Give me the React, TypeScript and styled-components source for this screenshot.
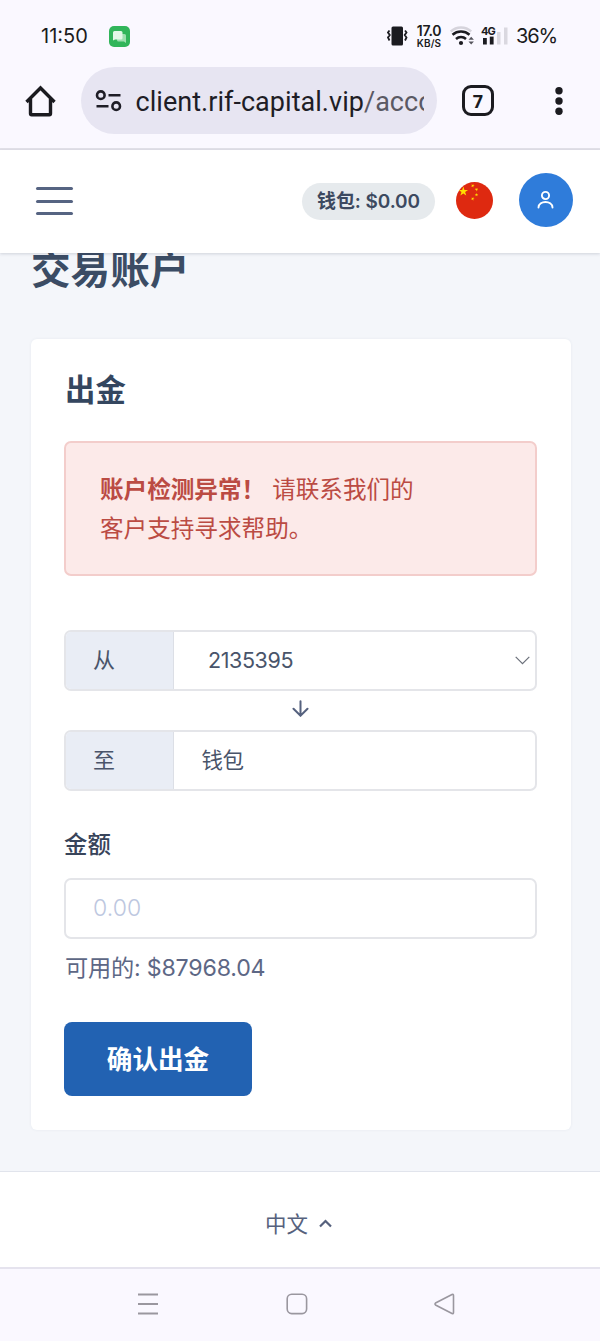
import React from "react";
import styled, { createGlobalStyle } from "styled-components";

const Global = createGlobalStyle`
  * { box-sizing: border-box; }
  body { margin: 0; background: #faf8ff; }
  button, input { font: inherit; }
  svg { display: block; flex: none; }
`;

const cjk = `"Noto Sans CJK SC", sans-serif`;

const Screen = styled.div`
  width: 600px;
  height: 1341px;
  display: flex;
  flex-direction: column;
  overflow: hidden;
  background: #faf8ff;
  font-family: Inter, ${cjk};
  color: #3f4b63;
  white-space: nowrap;
`;

const StatusBar = styled.div`
  height: 67px;
  padding: 5px 44px 0 41px;
  display: flex;
  align-items: center;
  color: #1b1b20;
`;

const Clock = styled.span`
  width: 68px;
  font: 400 20px/24px Inter, sans-serif;
  letter-spacing: 0;
`;

const StatusIcons = styled.div`
  margin-left: auto;
  display: flex;
  align-items: center;
`;

const NetSpeed = styled.div`
  width: 26px;
  margin: 0 8px 0 8px;
  text-align: center;
`;

const Rate = styled.div`
  font: 600 14px/14px Inter, sans-serif;
  letter-spacing: -0.3px;
`;

const RateUnit = styled.div`
  font: 600 10px/10px Inter, sans-serif;
  letter-spacing: 0.1px;
`;

const Battery = styled.span`
  width: 40px;
  margin-left: 8px;
  font: 400 20px/24px Inter, sans-serif;
  letter-spacing: -1.1px;
`;

const BrowserBar = styled.div`
  height: 83px;
  border-bottom: 2px solid #e2e1e9;
  padding: 0 32px 0 25px;
  display: flex;
  align-items: flex-start;
`;

const BarIcon = styled.div<{ $w: number; $indent?: number }>`
  width: ${(p) => p.$w}px;
  height: 67px;
  padding-left: ${(p) => p.$indent ?? 0}px;
  display: flex;
  align-items: center;
`;

const UrlPill = styled.div`
  width: 356px;
  height: 67px;
  border-radius: 34px;
  background: #e7e5f2;
  padding: 0 13px 0 14px;
  display: flex;
  align-items: center;
`;

const Url = styled.div`
  margin-left: 13.5px;
  width: 289px;
  overflow: hidden;
  font: 400 27px/40px Roboto, sans-serif;
  letter-spacing: 0.04px;
  color: #1e1d26;
  padding-top: 3px;
  span { color: #5a5964; }
`;

const TabCount = styled.div`
  width: 32px;
  height: 31px;
  border: 3px solid #1b1b20;
  border-radius: 9px;
  display: flex;
  align-items: center;
  justify-content: center;
  font: 700 18px/20px "Noto Sans", sans-serif;
  color: #1b1b20;
`;

const SiteHeader = styled.header`
  position: relative;
  z-index: 1;
  height: 103px;
  flex: none;
  background: #fff;
  box-shadow: 0 1px 3px rgba(40, 50, 80, 0.18);
  padding: 0 27px 4px 36px;
  display: flex;
  align-items: center;
`;

const Burger = styled.div`
  width: 37px;
  height: 28px;
  margin-top: 3px;
  display: flex;
  flex-direction: column;
  justify-content: space-between;
  i { height: 3px; border-radius: 2px; background: #566482; }
`;

const WalletBadge = styled.div`
  width: 133px;
  height: 37px;
  margin: 4px 21px 0 auto;
  border-radius: 19px;
  background: #e6eaed;
  color: #3c4960;
  display: flex;
  align-items: center;
  justify-content: center;
  font: 600 19px/28px Inter, ${cjk};
  letter-spacing: -0.1px;
`;

const FlagSlot = styled.div`
  margin-top: 2px;
`;

const Avatar = styled.div`
  width: 54px;
  height: 54px;
  margin-left: 26px;
  border-radius: 50%;
  background: #2f7cda;
  display: flex;
  align-items: center;
  justify-content: center;
`;

const Content = styled.main`
  height: 918px;
  flex: none;
  overflow: hidden;
  background: #f4f6fa;
  padding: 0 29px 0 31px;
`;

const PageTitle = styled.h1`
  margin: -7px 0 51px;
  height: 42px;
  font: 700 39.6px/42px ${cjk};
  color: #3b4c64;
`;

const Card = styled.section`
  height: 791px;
  border-radius: 6px;
  background: #fff;
  box-shadow: 0 0 3px rgba(40, 70, 100, 0.07);
  padding: 27px 34px 0 33px;
`;

const CardTitle = styled.h2`
  margin: 0 0 31px 1px;
  font: 700 30.4px/44px ${cjk};
  color: #34465f;
`;

const Alert = styled.div`
  height: 135px;
  border: 2px solid #f3cdcb;
  border-radius: 7px;
  background: #fceae9;
  padding: 26px 34px 0;
  color: #bb4b43;
  font: 400 23.6px/39px ${cjk};
  strong { font-weight: 700; }
  span { margin-left: 7px; }
`;

const Field = styled.div<{ $top?: number }>`
  height: 61px;
  margin-top: ${(p) => p.$top ?? 0}px;
  border: 2px solid #e4e5e9;
  border-radius: 7px;
  overflow: hidden;
  display: flex;
  align-items: stretch;
`;

const FieldLabel = styled.label`
  width: 108px;
  border-right: 1px solid #dcdfe6;
  background: #e9edf5;
  padding: 0 0 2px 27px;
  font: 400 22px/52px ${cjk};
  color: #49546a;
`;

const FieldValue = styled.div<{ $indent: number }>`
  flex: 1;
  padding: 0 5px 1px ${(p) => p.$indent}px;
  display: flex;
  align-items: center;
  justify-content: space-between;
  font: 400 21.5px/30px Inter, ${cjk};
  letter-spacing: -0.4px;
  color: #49546a;
`;

const ArrowRow = styled.div`
  height: 39px;
  padding-bottom: 4px;
  display: flex;
  align-items: center;
  justify-content: center;
`;

const AmountLabel = styled.label`
  display: block;
  margin: 35px 0 18px;
  font: 500 23.4px/34px ${cjk};
  color: #38445a;
`;

const AmountInput = styled.input`
  width: 100%;
  height: 61px;
  display: block;
  border: 2px solid #e4e5e9;
  border-radius: 7px;
  background: #fff;
  padding: 0 27px 1px;
  font: 300 23px/30px Inter, sans-serif;
  letter-spacing: 0.1px;
  &::placeholder { color: #bdc7e0; opacity: 1; }
`;

const Available = styled.div`
  margin-top: 12px;
  padding-left: 1px;
  font: 400 23.2px/34px Inter, ${cjk};
  letter-spacing: -0.2px;
  color: #5d6785;
`;

const Submit = styled.button`
  width: 188px;
  height: 74px;
  margin-top: 37px;
  display: block;
  border: 0;
  border-radius: 8px;
  background: #2262b2;
  color: #fff;
  padding: 0 0 2px;
  font: 700 25.6px/40px ${cjk};
`;

const Footer = styled.footer`
  height: 96px;
  flex: none;
  border-top: 1px solid #e1e4ec;
  background: #fff;
  padding: 7px 3px 0 0;
  display: flex;
  align-items: center;
  justify-content: center;
  gap: 11px;
  font: 400 21.5px/30px ${cjk};
  color: #56617d;
`;

const NavBar = styled.nav`
  flex: 1;
  border-top: 2px solid #e5e3ee;
  display: flex;
  align-items: center;
  justify-content: space-between;
  padding: 0 145px 2px 137px;
`;

const ChatIcon = () => (
  <svg width="21" height="21" viewBox="0 0 21 21">
    <rect width="21" height="21" rx="5" fill="#31b55a" />
    <path d="M9 8h6.500a1.500 1.500 0 0 1 1.500 1.500V17l-2-1.500H9.500A1.500 1.500 0 0 1 8 14z" fill="#9ee0b0" />
    <path d="M5.500 5h6.500a1.500 1.500 0 0 1 1.500 1.500v5.500a1.500 1.500 0 0 1-1.500 1.500H6L4 14.500v-8A1.500 1.500 0 0 1 5.500 5z" fill="#e2f8e7" />
  </svg>
);

const VibrateIcon = () => (
  <svg width="21" height="20" viewBox="0 0 21 20">
    <rect x="4.500" y="0.500" width="11.500" height="19" rx="1.500" fill="#1b1b20" />
    <path d="M2.500 4.500L1 6.500l1.800 2.500L1 11.500l1.500 3M18 4.500l1.500 2-1.800 2.500 1.800 2.500-1.500 3" fill="none" stroke="#1b1b20" strokeWidth="1.800" />
  </svg>
);

const WifiIcon = () => (
  <svg width="25" height="20" viewBox="0 0 25 20" fill="none">
    <g strokeWidth="2.500">
      <path d="M.8 5.500a15 15 0 0 1 20.400 0" stroke="#d6d4dc" />
      <path d="M2.500 8.700a13 13 0 0 1 17 0M6 13a7.500 7.500 0 0 1 10 0" stroke="#1b1b20" />
    </g>
    <circle cx="11" cy="17" r="2.100" fill="#1b1b20" />
    <path d="M18.500 13.800l2.700-3 2.700 3zM18.500 15.600l2.700 3 2.700-3z" fill="#55545c" />
  </svg>
);

const SignalIcon = () => (
  <svg width="27" height="20" viewBox="0 0 27 20" overflow="visible">
    <text x="0" y="9" fontFamily="Inter, sans-serif" fontSize="11" fontWeight="700" letterSpacing="-1" fill="#1b1b20">4G</text>
    <rect x="2" y="12" width="3.800" height="6.500" fill="#1b1b20" />
    <rect x="8.800" y="10.600" width="3.800" height="7.900" fill="#1b1b20" />
    <rect x="16" y="6" width="3.500" height="12.500" fill="#dad8e0" />
    <rect x="23" y="1.500" width="3.500" height="17" fill="#dad8e0" />
  </svg>
);

const SignalSlot = styled.div`
  margin-left: 6px;
`;

const HomeIcon = () => (
  <svg width="31" height="32" viewBox="0 0 31 32" fill="none" stroke="#1b1b20" strokeWidth="3.400" strokeLinejoin="round">
    <path d="M1.500 17L15.500 3l14 14" strokeLinejoin="miter" />
    <path d="M5.500 14v14.500q0 1.200 1.200 1.200h17.600q1.200 0 1.200-1.200V14" />
  </svg>
);

const TuneIcon = () => (
  <svg width="27" height="22" viewBox="0 0 27 22" fill="none" stroke="#1e1d26" strokeWidth="2.600">
    <circle cx="5.800" cy="5.200" r="3.800" />
    <path d="M13.500 5.200h12M1.500 16.200h12" />
    <circle cx="21.200" cy="16.200" r="3.800" />
  </svg>
);

const DotsIcon = () => (
  <svg width="8" height="28" viewBox="0 0 8 28" fill="#1b1b20">
    {[3.8, 14, 24.2].map((y) => <circle key={y} cx="4" cy={y} r="3.700" />)}
  </svg>
);

const star = "M0-1L.225-.309.951-.309.363.118.588.809 0 .382-.588.809-.363.118-.951-.309-.225-.309z";
const FlagIcon = () => (
  <svg width="37" height="37" viewBox="0 0 37 37">
    <circle cx="18.500" cy="18.500" r="18.500" fill="#de2910" />
    <g fill="#ffde00">
      <path d={star} transform="translate(7.300 9.500) scale(5)" />
      <path d={star} transform="translate(16.700 3.700) rotate(20) scale(1.900)" />
      <path d={star} transform="translate(20.500 7.500) rotate(40) scale(1.900)" />
      <path d={star} transform="translate(20.500 12.800) scale(1.900)" />
      <path d={star} transform="translate(16.700 16.800) rotate(20) scale(1.900)" />
    </g>
  </svg>
);

const UserIcon = () => (
  <svg width="18" height="20" viewBox="0 0 18 20" fill="none" stroke="#fff" strokeWidth="1.900" strokeLinecap="round">
    <circle cx="8.500" cy="5.500" r="3.600" />
    <path d="M1.500 17.500c.5-7.300 13.500-7.300 14 0" />
  </svg>
);

const SelectChevron = () => (
  <svg width="15" height="9" viewBox="0 0 15 9" fill="none" stroke="#6b707a" strokeWidth="1.200">
    <path d="M.7.800l6.800 6.800L14.300.8" />
  </svg>
);

const ArrowDown = () => (
  <svg width="17" height="17" viewBox="0 0 17 17" fill="none" stroke="#55617e" strokeWidth="2" strokeLinecap="round">
    <path d="M8.500 1.200V15.500M1.500 8.700l7 7 7-7" />
  </svg>
);

const ChevronUp = () => (
  <svg width="13" height="9" viewBox="0 0 13 9" fill="none" stroke="#56617d" strokeWidth="2.200">
    <path d="M1 7.500L6.500 2 12 7.500" />
  </svg>
);

const RecentsIcon = () => (
  <svg width="22" height="22" viewBox="0 0 22 22" stroke="#9a979f" strokeWidth="1.800">
    <path d="M1 1.500h20M1 11h20M1 20.500h20" />
  </svg>
);

const HomeKey = () => (
  <svg width="22" height="22" viewBox="0 0 22 22" fill="none" stroke="#9a979f" strokeWidth="1.600">
    <rect x="1.200" y="1.200" width="19.400" height="19.400" rx="4.500" />
  </svg>
);

const BackKey = () => (
  <svg width="21" height="22" viewBox="0 0 21 22" fill="none" stroke="#9a979f" strokeWidth="1.600" strokeLinejoin="round">
    <path d="M1.500 10L18 1.500q1.500-.5 1.500 1v17q0 1.500-1.500 1L1.500 12q-1-1 0-2z" />
  </svg>
);

export default function App() {
  return (
    <Screen>
      <Global />
      <StatusBar>
        <Clock>11:50</Clock>
        <ChatIcon />
        <StatusIcons>
          <VibrateIcon />
          <NetSpeed>
            <Rate>17.0</Rate>
            <RateUnit>KB/S</RateUnit>
          </NetSpeed>
          <WifiIcon />
          <SignalSlot><SignalIcon /></SignalSlot>
          <Battery>36%</Battery>
        </StatusIcons>
      </StatusBar>
      <BrowserBar>
        <BarIcon $w={56}><HomeIcon /></BarIcon>
        <UrlPill>
          <TuneIcon />
          <Url>client.rif-capital.vip<span>/account</span></Url>
        </UrlPill>
        <BarIcon $w={118} $indent={25}><TabCount>7</TabCount></BarIcon>
        <BarIcon $w={8}><DotsIcon /></BarIcon>
      </BrowserBar>
      <SiteHeader>
        <Burger><i /><i /><i /></Burger>
        <WalletBadge>钱包: $0.00</WalletBadge>
        <FlagSlot><FlagIcon /></FlagSlot>
        <Avatar><UserIcon /></Avatar>
      </SiteHeader>
      <Content>
        <PageTitle>交易账户</PageTitle>
        <Card>
          <CardTitle>出金</CardTitle>
          <Alert>
            <strong>账户检测异常！</strong><span>请联系我们的</span>
            <br />
            客户支持寻求帮助。
          </Alert>
          <Field $top={54}>
            <FieldLabel>从</FieldLabel>
            <FieldValue $indent={34}>2135395<SelectChevron /></FieldValue>
          </Field>
          <ArrowRow><ArrowDown /></ArrowRow>
          <Field>
            <FieldLabel>至</FieldLabel>
            <FieldValue $indent={27.5}>钱包</FieldValue>
          </Field>
          <AmountLabel>金额</AmountLabel>
          <AmountInput placeholder="0.00" />
          <Available>可用的: $87968.04</Available>
          <Submit>确认出金</Submit>
        </Card>
      </Content>
      <Footer>中文<ChevronUp /></Footer>
      <NavBar>
        <RecentsIcon />
        <HomeKey />
        <BackKey />
      </NavBar>
    </Screen>
  );
}
